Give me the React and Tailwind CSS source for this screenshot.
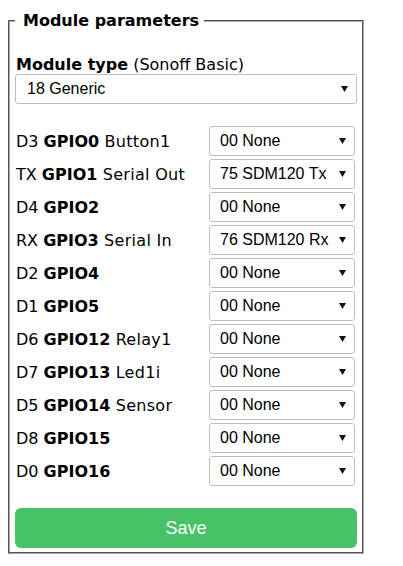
import React from 'react'

const rows = [
  { pin: 'D3', gpio: 'GPIO0', name: 'Button1', value: '00 None' },
  { pin: 'TX', gpio: 'GPIO1', name: 'Serial Out', value: '75 SDM120 Tx' },
  { pin: 'D4', gpio: 'GPIO2', name: '', value: '00 None' },
  { pin: 'RX', gpio: 'GPIO3', name: 'Serial In', value: '76 SDM120 Rx' },
  { pin: 'D2', gpio: 'GPIO4', name: '', value: '00 None' },
  { pin: 'D1', gpio: 'GPIO5', name: '', value: '00 None' },
  { pin: 'D6', gpio: 'GPIO12', name: 'Relay1', value: '00 None' },
  { pin: 'D7', gpio: 'GPIO13', name: 'Led1i', value: '00 None' },
  { pin: 'D5', gpio: 'GPIO14', name: 'Sensor', value: '00 None' },
  { pin: 'D8', gpio: 'GPIO15', name: '', value: '00 None' },
  { pin: 'D0', gpio: 'GPIO16', name: '', value: '00 None' },
]

// fake native select (arrow drawn as small triangle)
const Select = ({ value, className }) => (
  <div
    className={`relative h-[30px] flex items-center pl-[10px] border border-[#bdbdbd] rounded-[3px] bg-white text-black text-[16px] font-['Liberation_Sans',Arial,sans-serif] ${className}`}
  >
    <span className="leading-none">{value}</span>
    <svg className="absolute right-[8px] top-1/2 -translate-y-1/2" width="7" height="6" viewBox="0 0 7 6">
      <polygon points="0,0 7,0 3.5,6" fill="#111" />
    </svg>
  </div>
)

export default function App() {
  return (
    <div className="bg-white min-h-[566px] pt-[11px] px-[8px] font-['DejaVu_Sans',Verdana,sans-serif] text-black">
      <fieldset className="w-[356px] border-2 [border-style:groove] border-[#a8a8a8] px-[5px] pb-[4px]">
        <legend className="pl-[8px] pr-[5px] text-[16px] font-bold leading-[19px]">Module parameters</legend>

        {/* Module type */}
        <p className="mt-[25px] pl-[1px] text-[16px] leading-[19px]">
          <b>Module type</b> (Sonoff Basic)
        </p>
        <Select value="18 Generic" className="w-[342px] pl-[11px]" />

        {/* GPIO rows */}
        <div className="mt-[22px] flex flex-col gap-[3px]">
          {rows.map((row) => (
            <div key={row.gpio} className="flex items-center">
              <div className="flex-1 pl-[1px] text-[16px] leading-[19px] whitespace-nowrap">
                {row.pin} <b>{row.gpio}</b>
                {row.name && <span className="tracking-[0.3px]"> {row.name}</span>}
              </div>
              <Select value={row.value} className="w-[146px] mr-[2px]" />
            </div>
          ))}
        </div>

        <button className="mt-[22px] w-[342px] h-[40px] rounded-[6px] bg-[#47c266] text-white text-[18px] font-['Liberation_Sans',Arial,sans-serif]">
          Save
        </button>
      </fieldset>
    </div>
  )
}
